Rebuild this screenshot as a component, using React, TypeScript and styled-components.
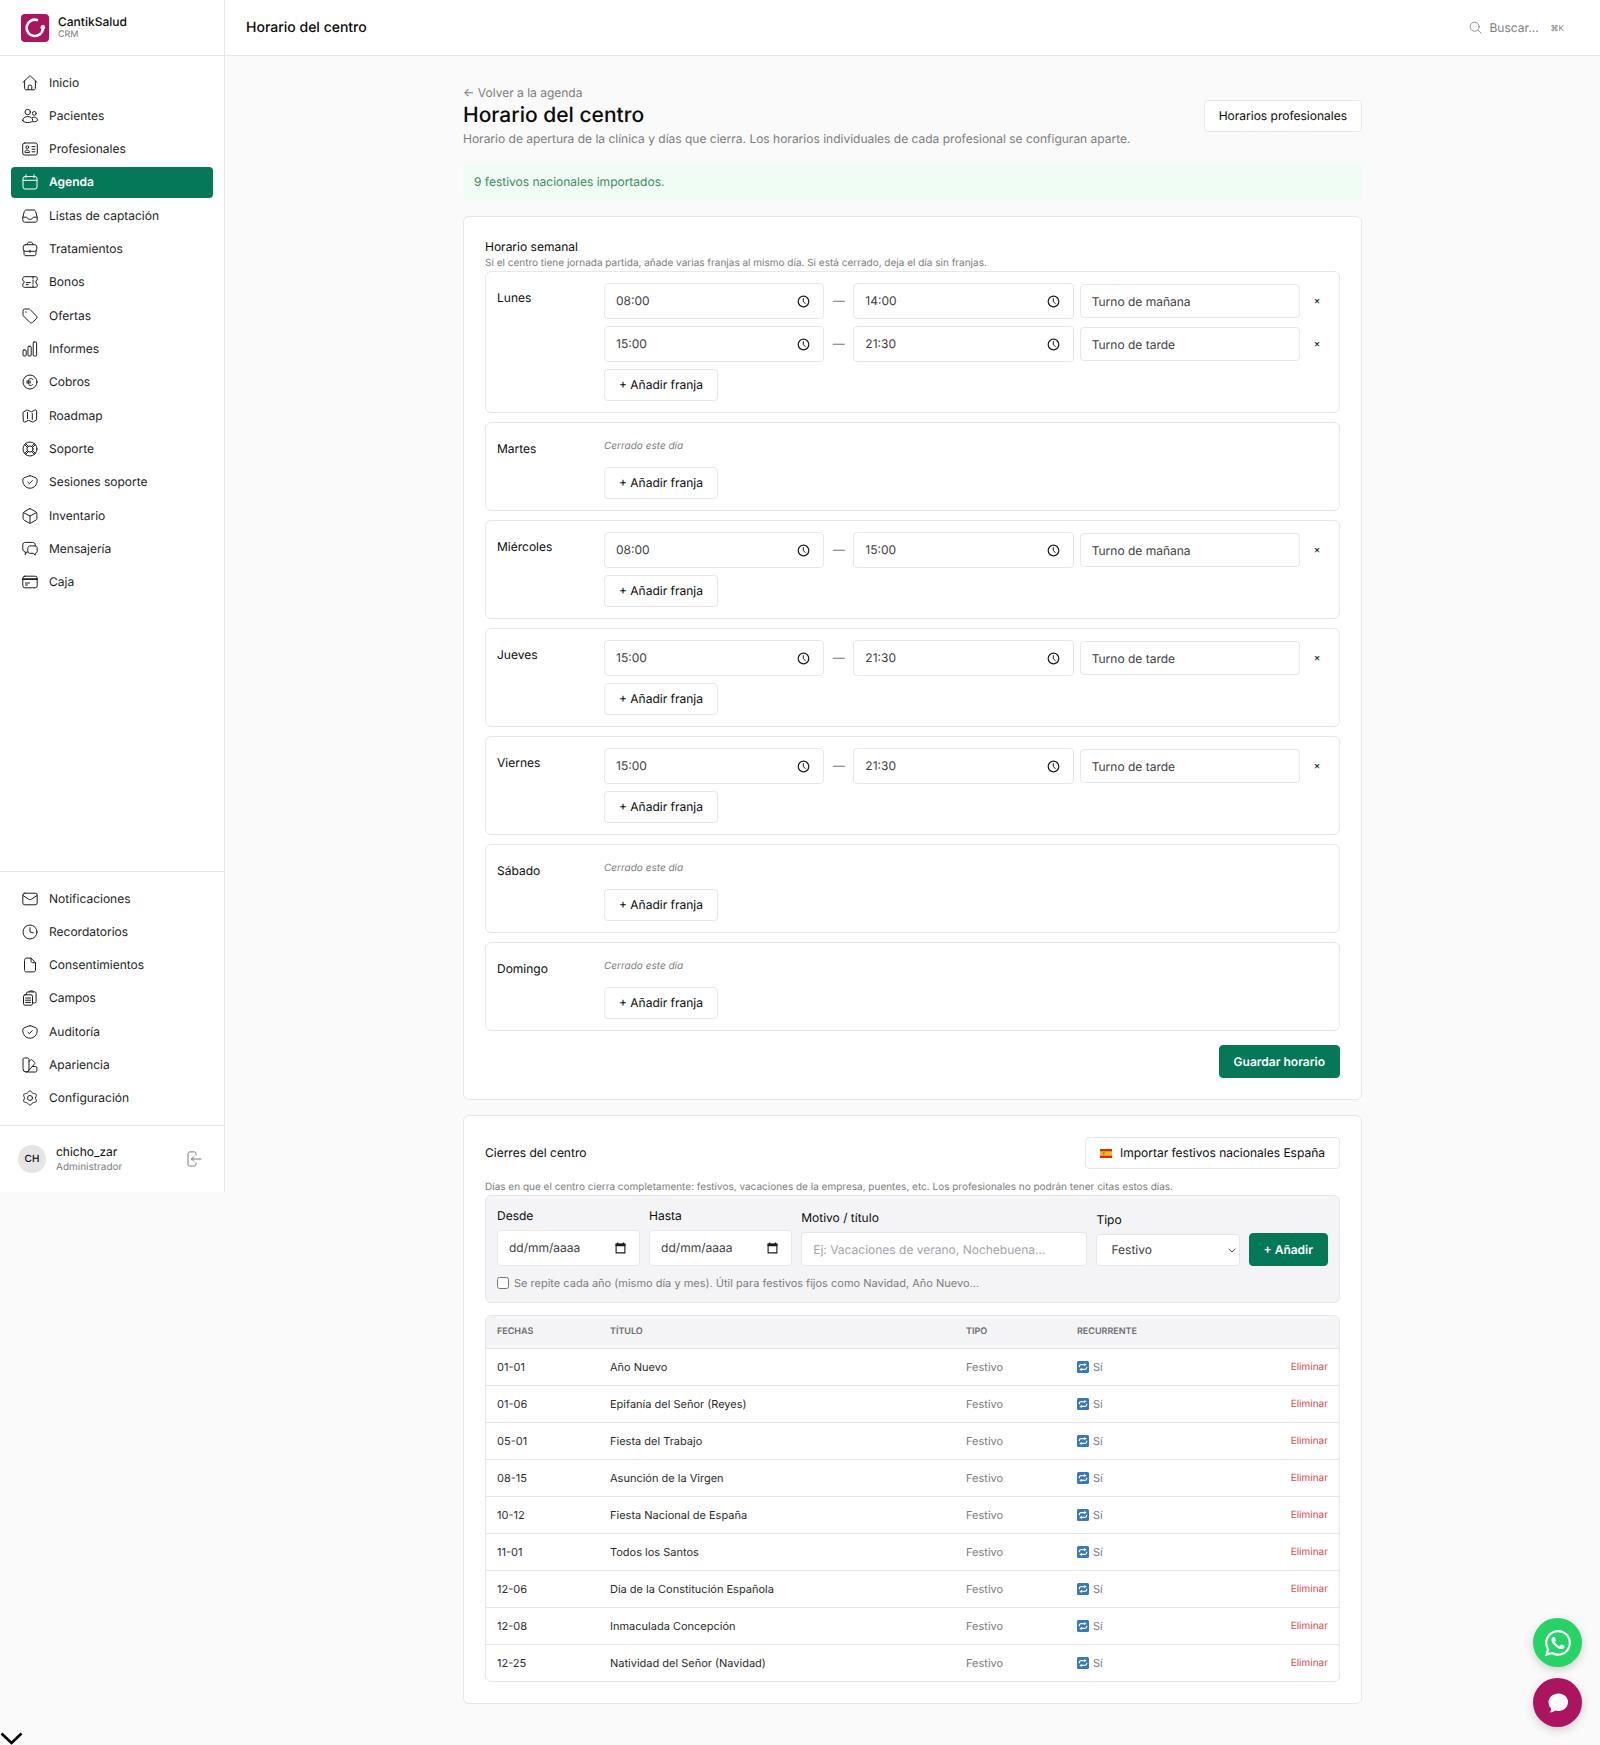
import React, { useState } from "react";
import styled, { createGlobalStyle, css } from "styled-components";

const color = {
  text: "#0a0a0a",
  soft: "#404040",
  muted: "#7c7c7c",
  line: "#e7e7e9",
  page: "#fafafa",
  panel: "#f4f4f6",
  green: "#047857",
  brand: "#ab155f",
};

const GlobalStyle = createGlobalStyle`
  *, *::before, *::after { box-sizing: border-box; }
  body {
    margin: 0;
    background: ${color.page};
    color: ${color.text};
    font-family: Inter, "Liberation Sans", sans-serif;
    font-size: 12px;
    line-height: 18px;
    text-rendering: geometricPrecision;
    -webkit-font-smoothing: antialiased;
  }
  h1, h2, p, ul { margin: 0; padding: 0; }
  button, input, select { font: inherit; color: inherit; text-rendering: inherit; }
  a { color: inherit; text-decoration: none; }
  svg { display: block; flex: none; }
`;

/* ---------- icons ---------- */

/* six-lobed outline of the settings wheel */
const wheel =
  Array.from({ length: 72 }, (_, i) => {
    const a = (i * Math.PI) / 36;
    const r = 6.3 + 0.8 * Math.cos(6 * (a - Math.PI / 2));
    return `${i ? "L" : "M"}${(8 + r * Math.cos(a)).toFixed(2)} ${(8 + r * Math.sin(a)).toFixed(2)}`;
  }).join("") + "Z";

const icons: Record<string, React.ReactNode> = {
  home: <><path d="M1 7.4 7.3 1.2a1 1 0 0 1 1.4 0L15 7.4M2.6 6v7.3c0 .9.6 1.5 1.5 1.5h7.8c.9 0 1.5-.6 1.5-1.5V6" /><path d="M6.2 14.6v-3.4c0-.6.4-1 1-1h1.6c.6 0 1 .4 1 1v3.4" /></>,
  people: <><circle cx="5.7" cy="4" r="2.7" /><circle cx="12.3" cy="5.4" r="1.9" /><path d="M.7 12.4c0-2.400 2.200-3.800 5-3.800s5 1.400 5 3.800c0 1.300-2.300 2.100-5 2.100s-5-.8-5-2.100Z" /><path d="M10.400 9.500c.6-.3 1.200-.4 1.900-.4 1.800 0 3.100 1.300 3.100 3 0 1.100-1.500 1.700-4.800 1.700" /></>,
  idcard: <><rect x=".7" y="2" width="14.600" height="12" rx="2" /><circle cx="5.300" cy="6.200" r="1.400" /><path d="M3 11c0-1.300 1-1.900 2.300-1.900s2.300.6 2.300 1.900zM10 5.600h3M10 8.200h3M10 10.800h3" /></>,
  calendar: <><rect x="1" y="2.500" width="14" height="12.500" rx="2" /><path d="M1 6.300h14M4 .8v3M12 .8v3" /></>,
  inbox: <path d="M.8 9.200h3.600c.6 0 .9.4 1.100.9.300.8 1 1.200 1.700 1.200h1.600c.7 0 1.400-.4 1.700-1.200.2-.5.500-.9 1.100-.9h3.600M.8 9.200l1.500-5.600C2.600 2.500 3.300 2 4.300 2h7.400c1 0 1.700.5 2 1.600l1.500 5.600v3.100c0 1.200-.7 1.900-1.900 1.900H2.700c-1.200 0-1.900-.7-1.900-1.900z" />,
  briefcase: <><rect x="1.200" y="3.700" width="13.600" height="6.600" rx="2.200" /><path d="M5.200 3.500c0-1.500.8-2.300 2-2.300h1.600c1.200 0 2 .8 2 2.300M2 10v2.800c0 1.200.7 1.900 1.900 1.900h8.200c1.200 0 1.900-.7 1.900-1.900V10M8 9.300v2" /></>,
  ticket: <><path d="M.8 4.300c0-1 .6-1.600 1.600-1.600h11.200c1 0 1.600.6 1.600 1.600v1.800a2 2 0 0 0 0 3.800v1.800c0 1-.6 1.600-1.600 1.600H2.400c-1 0-1.600-.6-1.600-1.600V9.900a2 2 0 0 0 0-3.800z" /><path d="M11 3v1.500M11 6v1.500M11 8.600v1.500M11 11.500V13M4.300 8.600h4M4.300 10.600h2" /></>,
  tag: <><path d="M1 2.800C1 1.700 1.700 1 2.800 1h4c.5 0 1 .2 1.300.6l6.300 6.300c.8.8.8 1.900 0 2.700l-3.800 3.800c-.8.8-1.900.8-2.700 0L1.600 8.100C1.200 7.800 1 7.300 1 6.800z" /><path d="M3.700 4h.6" /></>,
  chart: <><rect x="1" y="9" width="3.200" height="6" rx=".9" /><rect x="6" y="5.300" width="3.200" height="9.700" rx=".9" /><rect x="11.200" y="1" width="3.400" height="14" rx=".9" /></>,
  euro: <><circle cx="8" cy="8" r="7" /><path d="M10.800 5.500c-.5-.7-1.200-1-2-1-1.600 0-2.700 1.500-2.700 3.500s1.100 3.500 2.700 3.500c.8 0 1.500-.3 2-1M4.700 7.100h4M4.700 8.900h4" /></>,
  map: <path d="m1.300 4.300 3.100-2c.5-.3 1-.3 1.500 0l2.800 1.300c.4.200.9.200 1.300 0l2.700-1.500c1-.5 1.900 0 1.900 1v8.700l-3.100 2c-.5.3-1 .3-1.500 0l-2.800-1.300c-.4-.2-.9-.2-1.300 0l-2.700 1.500c-1 .5-1.900 0-1.900-1zM5.500 4.500v6M10.300 5.500v6" />,
  ring: <><circle cx="8" cy="8" r="7" /><circle cx="8" cy="8" r="3.100" /><path d="m2.600 3.700 2.600 2.500M3.700 2.600l2.500 2.600M10.800 6.200l2.600-2.500M9.800 5.200l2.500-2.600M10.800 9.800l2.600 2.500M9.800 10.800l2.500 2.600M5.200 9.800l-2.600 2.500M6.200 10.800l-2.500 2.600" /></>,
  shield: <><path d="M8 1.700c1 0 1.900.6 3.500 1.200 2.200.8 3.700 1 3.700 3.400 0 4.500-3 7.900-7.200 7.900S.8 10.800.8 6.300c0-2.400 1.500-2.600 3.700-3.400C6.100 2.300 7 1.700 8 1.700Z" /><path d="m5.800 8.200 1.600 1.500 2.900-3.100" /></>,
  box: <path d="M8 .8c.4 0 .8.1 1.200.3l4.700 2.800c.6.400 1 .9 1 1.600v5c0 .7-.4 1.200-1 1.600l-4.700 2.800c-.8.4-1.600.4-2.400 0l-4.700-2.800c-.6-.4-1-.9-1-1.600v-5c0-.7.4-1.200 1-1.600l4.700-2.800c.4-.2.8-.3 1.200-.3ZM1.500 4.600 8 8l6.500-3.400M8 8v7" />,
  chat: <><path d="M5.800 11H4.500l-1.200 2.600V10.800C1.600 10.500.8 9.500.8 7.900V4c0-1.700.9-2.600 2.600-2.600h7.200c1.700 0 2.600.9 2.600 2.600v.8" /><path d="M5.800 7.200c0-1.500.8-2.300 2.300-2.300h4.800c1.500 0 2.300.8 2.300 2.300V10c0 1.400-.7 2.200-2 2.300v1.900l-1.900-1.900H8.100c-1.500 0-2.300-.8-2.300-2.300z" /></>,
  card: <><rect x=".8" y="2.200" width="14.400" height="11.600" rx="2" /><path d="M.8 5.200h14.400" strokeWidth="1.700" /><path d="M3.500 9h4M3.500 11h2" /></>,
  mail: <><rect x=".8" y="2.200" width="14.400" height="11.600" rx="2" /><path d="m1 4.500 5.500 3.600c1 .6 2 .6 3 0L15 4.500" /></>,
  clock: <><circle cx="8" cy="8" r="7" /><path d="M8 3.800V8l3.300.8" /></>,
  file: <path d="M2.500 3c0-1.200.7-1.900 1.900-1.900h4.500L13.500 5.700V13c0 1.200-.7 1.900-1.900 1.900H4.400c-1.200 0-1.900-.7-1.900-1.900zM9 1.300v2.500c0 1.200.7 1.900 1.900 1.900h2.400" />,
  clipboard: <><rect x="1.500" y="4.800" width="9" height="10.400" rx="1.500" /><path d="M4.500 4.500V3.300c0-.9.5-1.400 1.400-1.400h6.800c.9 0 1.400.5 1.400 1.400v8.200c0 .9-.5 1.400-1.400 1.400h-1.900M7.200 1.900c0-.6.4-1 1-1h2.200c.6 0 1 .4 1 1M3.600 8h5M3.600 10.200h5M3.600 12.400h5" /></>,
  swatch: <><path d="M1 2.400C1 1.500 1.500 1 2.400 1h3.200C6.500 1 7 1.500 7 2.400V12a3 3 0 0 1-6 0zM7 4.500l1.400-1.400c.6-.6 1.300-.6 1.900 0l2.100 2.100c.6.6.6 1.300 0 1.900L6 14.300M10.500 9.500h3c.9 0 1.400.5 1.400 1.400v2.700c0 .9-.5 1.400-1.400 1.400H4" /></>,
  gear: <><circle cx="8" cy="8" r="2.500" /><path d={wheel} /></>,
  logout: <path d="M10 4V2.800c0-1.200-.7-1.900-1.900-1.900H3.900C2.700.9 2 1.600 2 2.800v10.400c0 1.200.7 1.900 1.900 1.900h4.200c1.200 0 1.900-.7 1.900-1.900V12M15 8H5.500M8 5.500 5.500 8 8 10.500" />,
  search: <><circle cx="7" cy="7" r="5.600" /><path d="m11.200 11.200 3.600 3.600" /></>,
};

function Icon({ name, size = 16 }: { name: string; size?: number }) {
  return (
    <svg width={size} height={size} viewBox="0 0 16 16" fill="none" stroke="currentColor" strokeLinecap="round" strokeLinejoin="round" aria-hidden="true">
      {icons[name]}
    </svg>
  );
}

const Logo = () => (
  <svg width="28" height="28" viewBox="0 0 28 28" aria-hidden="true">
    <rect width="28" height="28" rx="4" fill={color.brand} />
    <path d="M16 5.900A8.200 8.200 0 1 0 22 14" fill="none" stroke="#fff" strokeWidth="2.600" strokeLinecap="round" />
    <circle cx="21.800" cy="13.400" r="2.300" fill="#fff" />
  </svg>
);

const ClockGlyph = () => (
  <svg width="13" height="13" viewBox="0 0 13 13" fill="none" stroke="#1a1a1a" strokeWidth="1.200" aria-hidden="true">
    <circle cx="6.500" cy="6.500" r="5.300" />
    <path d="M6.300 3.200v3.500l2.300 2" strokeWidth="1" />
  </svg>
);

const DateGlyph = () => (
  <svg width="11" height="12" viewBox="0 0 11 12" aria-hidden="true">
    <path d="M1.100 2.200h8.800v8.700H1.100z" fill="none" stroke="#1a1a1a" strokeWidth="1.100" />
    <path d="M.6 1.600h9.800v2.600H.6zM2 .4h1.300v1.400H2zM7.700.4H9v1.400H7.700z" fill="#1a1a1a" />
  </svg>
);

const SelectArrow = styled.svg.attrs({ width: 8, height: 5, viewBox: "0 0 8 5", fill: "none", stroke: "#444", children: <path d="m.7.700 3.300 3.300 3.300-3.300" /> })`
  justify-self: end;
  margin-right: 3px;
  pointer-events: none;
`;

const SpainFlag = () => (
  <svg width="12" height="9" viewBox="0 0 12 9" aria-hidden="true">
    <path d="M0 0h12v9H0z" fill="#d52b1e" />
    <path d="M0 2.300h12v4.400H0z" fill="#fbbf12" />
    <path d="M2.700 3h2v2.700h-2z" fill="#d0733c" />
  </svg>
);

const RepeatGlyph = () => (
  <svg width="12" height="12" viewBox="0 0 12 12" aria-hidden="true">
    <rect width="12" height="12" rx="1.500" fill="#3478bd" />
    <path d="M2.300 6.200V5.400c0-1.100.7-1.800 1.800-1.800h3.600M9.700 5.800v.8c0 1.100-.7 1.800-1.800 1.800H4.300" fill="none" stroke="#fff" strokeWidth="1.200" />
    <path d="m7.200 1.900 2.500 1.700-2.500 1.700zM4.800 6.700 2.300 8.400l2.500 1.700z" fill="#fff" />
  </svg>
);

/* ---------- shell ---------- */

const Shell = styled.div`
  display: grid;
  grid-template-columns: 225px minmax(0, 1fr);
  align-items: start;
`;

const Sidebar = styled.aside`
  display: flex;
  flex-direction: column;
  min-height: 1192px;
  background: #fff;
  border-right: 1px solid ${color.line};
`;

const Brand = styled.div`
  display: flex;
  align-items: center;
  gap: 9px;
  height: 56px;
  padding: 0 21px;
  border-bottom: 1px solid ${color.line};
`;

const BrandName = styled.div`
  font-weight: 500;
  line-height: 14px;
`;

const BrandTag = styled.div`
  font-size: 9px;
  line-height: 12px;
  color: ${color.muted};
`;

const PrimaryNav = styled.nav`
  flex: 1;
  padding: 11px 11px;
`;

const SecondaryNav = styled.nav`
  padding: 11px 11px;
  border-top: 1px solid ${color.line};
`;

const NavList = styled.ul<{ $height: number }>`
  display: flex;
  flex-direction: column;
  justify-content: space-between;
  min-height: ${(p) => p.$height}px;
  list-style: none;
`;

const NavLink = styled.a<{ $active?: boolean }>`
  display: flex;
  align-items: center;
  gap: 11px;
  height: 31px;
  padding: 0 11px;
  border-radius: 4px;
  color: #1c1c1c;
  ${(p) =>
    p.$active &&
    css`
      background: ${color.green};
      color: #fff;
      font-weight: 600;
    `}
`;

const UserBar = styled.div`
  display: flex;
  align-items: center;
  gap: 10px;
  height: 67px;
  padding: 0 22px 0 18px;
  border-top: 1px solid ${color.line};
`;

const Avatar = styled.div`
  display: grid;
  place-items: center;
  width: 28px;
  height: 28px;
  border-radius: 50%;
  background: #e5e5e5;
  font-size: 10px;
  font-weight: 500;
`;

const UserText = styled.div`
  flex: 1;
  line-height: 16px;
`;

const UserRole = styled.div`
  font-size: 10px;
  line-height: 15px;
  color: ${color.muted};
`;

const IconButton = styled.button`
  display: grid;
  place-items: center;
  padding: 0;
  border: 0;
  background: none;
  color: ${color.muted};
`;

const Topbar = styled.header`
  display: flex;
  align-items: center;
  justify-content: space-between;
  height: 56px;
  padding: 0 36px 0 21px;
  background: #fff;
  border-bottom: 1px solid ${color.line};
`;

const TopTitle = styled.div`
  font-size: 14px;
  font-weight: 500;
`;

const SearchButton = styled.button`
  display: flex;
  align-items: center;
  gap: 7px;
  padding: 0;
  border: 0;
  background: none;
  color: ${color.muted};
`;

const Shortcut = styled.kbd`
  margin-left: 5px;
  font-family: inherit;
  font-size: 8px;
`;

const Content = styled.main`
  display: flex;
  flex-direction: column;
  gap: 15px;
  max-width: 943px;
  margin: 0 auto;
  padding: 28px 22px 27px;
`;

const PageHead = styled.div`
  display: flex;
  align-items: center;
  justify-content: space-between;
`;

const BackLink = styled.a`
  display: block;
  color: ${color.muted};
`;

const PageTitle = styled.h1`
  font-size: 21px;
  font-weight: 500;
  line-height: 28px;
`;

const Lead = styled.p`
  color: ${color.muted};
`;

const Notice = styled.div`
  padding: 10px 11px;
  border-radius: 4px;
  background: #effdf4;
  color: #3d8a60;
`;

const Button = styled.button<{ $primary?: boolean }>`
  display: inline-flex;
  align-items: center;
  justify-content: center;
  gap: 8px;
  height: 32px;
  padding: 0 14px;
  border: 1px solid ${color.line};
  border-radius: 4px;
  background: #fff;
  white-space: nowrap;
  ${(p) =>
    p.$primary &&
    css`
      height: 33px;
      border-color: ${color.green};
      background: ${color.green};
      color: #fff;
      font-weight: 600;
    `}
`;

const ButtonLink = styled(Button).attrs({ as: "a", href: "#profesionales" })``;

const Card = styled.section`
  padding: 21px;
  border: 1px solid ${color.line};
  border-radius: 6px;
  background: #fff;
`;

const CardTitle = styled.h2`
  font-size: 12px;
  font-weight: 400;
  line-height: 18px;
`;

const CardHint = styled.p`
  font-size: 10px;
  line-height: 15px;
  color: ${color.muted};
`;

/* ---------- weekly schedule ---------- */

const DayList = styled.div`
  display: flex;
  flex-direction: column;
  gap: 9px;
`;

const DayBox = styled.div`
  display: grid;
  grid-template-columns: 96px minmax(0, 1fr);
  column-gap: 11px;
  padding: 11px;
  border: 1px solid ${color.line};
  border-radius: 6px;
`;

const DayName = styled.div`
  padding-top: 6px;
`;

const Slots = styled.div`
  display: flex;
  flex-direction: column;
  align-items: flex-start;
  gap: 7px;
`;

const Slot = styled.div`
  display: grid;
  grid-template-columns: minmax(0, 1fr) 17px minmax(0, 1fr) minmax(0, 1fr) 22px;
  align-items: center;
  gap: 6px;
  width: 100%;
`;

const Dash = styled.span`
  text-align: center;
  color: ${color.muted};
`;

const Closed = styled.p`
  padding: 3px 0 5px;
  font-size: 10px;
  font-style: italic;
  color: ${color.muted};
`;

const boxed = css`
  width: 100%;
  border: 1px solid ${color.line};
  border-radius: 4px;
  background: #fff;
  color: ${color.soft};
`;

const PickerBox = styled.div`
  ${boxed}
  display: flex;
  align-items: center;
  height: 36px;
  padding: 0 13px 0 11px;
`;

const PickerInput = styled.input`
  flex: 1;
  min-width: 0;
  padding: 0;
  border: 0;
  outline: 0;
  background: none;
  &::placeholder {
    color: ${color.soft};
    opacity: 1;
  }
`;

const TextInput = styled.input`
  ${boxed}
  height: 34px;
  padding: 0 11px;
  &::placeholder {
    color: #a3a3a8;
    opacity: 1;
  }
`;

const SelectBox = styled.div`
  ${boxed}
  display: grid;
  align-items: center;
  height: 32px;
  & > * {
    grid-area: 1 / 1;
  }
`;

const Select = styled.select`
  appearance: none;
  width: 100%;
  height: 30px;
  padding: 0 14px;
  border: 0;
  background: none;
`;

const RemoveButton = styled.button`
  padding: 0;
  border: 0;
  background: none;
  font-size: 10px;
`;

const CardFoot = styled.div`
  display: flex;
  justify-content: flex-end;
  padding-top: 14px;
`;

/* ---------- closures ---------- */

const CardHead = styled.div`
  display: flex;
  align-items: center;
  justify-content: space-between;
  margin-bottom: 11px;
`;

const ClosureForm = styled.form`
  display: flex;
  flex-direction: column;
  gap: 9px;
  margin-bottom: 12px;
  padding: 11px;
  border: 1px solid ${color.line};
  border-radius: 6px;
  background: ${color.panel};
`;

const Fields = styled.div`
  display: grid;
  grid-template-columns: minmax(0, 1fr) minmax(0, 1fr) minmax(0, 2fr) minmax(0, 1fr) auto;
  align-items: end;
  gap: 9px;
`;

const Field = styled.div`
  display: flex;
  flex-direction: column;
  gap: 5px;
`;

const CheckLabel = styled.label`
  display: flex;
  align-items: center;
  gap: 5px;
  height: 16px;
  font-size: 11px;
  color: ${color.muted};
`;

const CheckBox = styled.input`
  width: 12px;
  height: 12px;
  margin: 0;
`;

const TableFrame = styled.div`
  overflow: hidden;
  border: 1px solid ${color.line};
  border-radius: 6px;
`;

const Table = styled.table`
  width: 100%;
  border-collapse: collapse;
  table-layout: fixed;
  font-size: 11px;
`;

const Th = styled.th<{ $width?: string }>`
  width: ${(p) => p.$width ?? "auto"};
  height: 32px;
  padding: 0 11px;
  background: ${color.panel};
  color: #6b6b70;
  font-size: 9px;
  font-weight: 600;
  text-align: left;
`;

const Row = styled.tr`
  border-top: 1px solid ${color.line};
`;

const Td = styled.td<{ $muted?: boolean; $end?: boolean }>`
  height: 37px;
  padding: 0 11px;
  color: ${(p) => (p.$muted ? color.muted : "#2b2b2b")};
  text-align: ${(p) => (p.$end ? "right" : "left")};
`;

const Recurring = styled.span`
  display: flex;
  align-items: center;
  gap: 4px;
`;

const DeleteButton = styled.button`
  padding: 0;
  border: 0;
  background: none;
  color: #e0484d;
  font-size: 10px;
`;

/* ---------- floating ---------- */

const Floating = styled.div`
  position: fixed;
  right: 18px;
  bottom: 18px;
  display: flex;
  flex-direction: column;
  gap: 11px;
`;

const RoundButton = styled.button<{ $bg: string }>`
  display: grid;
  place-items: center;
  width: 49px;
  height: 49px;
  padding: 0;
  border: 0;
  border-radius: 50%;
  background: ${(p) => p.$bg};
  color: #fff;
  box-shadow: 0 3px 10px rgba(0, 0, 0, 0.18);
`;

const ScrollCue = styled.div`
  height: 15px;
`;

/* ---------- data ---------- */

const primary: [string, string][] = [
  ["home", "Inicio"],
  ["people", "Pacientes"],
  ["idcard", "Profesionales"],
  ["calendar", "Agenda"],
  ["inbox", "Listas de captación"],
  ["briefcase", "Tratamientos"],
  ["ticket", "Bonos"],
  ["tag", "Ofertas"],
  ["chart", "Informes"],
  ["euro", "Cobros"],
  ["map", "Roadmap"],
  ["ring", "Soporte"],
  ["shield", "Sesiones soporte"],
  ["box", "Inventario"],
  ["chat", "Mensajería"],
  ["card", "Caja"],
];

const secondary: [string, string][] = [
  ["mail", "Notificaciones"],
  ["clock", "Recordatorios"],
  ["file", "Consentimientos"],
  ["clipboard", "Campos"],
  ["shield", "Auditoría"],
  ["swatch", "Apariencia"],
  ["gear", "Configuración"],
];

const morning = "Turno de mañana";
const evening = "Turno de tarde";

const week: { day: string; slots: [string, string, string][] }[] = [
  { day: "Lunes", slots: [["08:00", "14:00", morning], ["15:00", "21:30", evening]] },
  { day: "Martes", slots: [] },
  { day: "Miércoles", slots: [["08:00", "15:00", morning]] },
  { day: "Jueves", slots: [["15:00", "21:30", evening]] },
  { day: "Viernes", slots: [["15:00", "21:30", evening]] },
  { day: "Sábado", slots: [] },
  { day: "Domingo", slots: [] },
];

const holidays: [string, string][] = [
  ["01-01", "Año Nuevo"],
  ["01-06", "Epifanía del Señor (Reyes)"],
  ["05-01", "Fiesta del Trabajo"],
  ["08-15", "Asunción de la Virgen"],
  ["10-12", "Fiesta Nacional de España"],
  ["11-01", "Todos los Santos"],
  ["12-06", "Día de la Constitución Española"],
  ["12-08", "Inmaculada Concepción"],
  ["12-25", "Natividad del Señor (Navidad)"],
];

/* ---------- components ---------- */

function Nav({ items, height }: { items: [string, string][]; height: number }) {
  return (
    <NavList $height={height}>
      {items.map(([icon, label]) => (
        <li key={label}>
          <NavLink href={`#${icon}`} $active={label === "Agenda"}>
            <Icon name={icon} />
            {label}
          </NavLink>
        </li>
      ))}
    </NavList>
  );
}

function TimeField({ value, label }: { value: string; label: string }) {
  return (
    <PickerBox>
      <PickerInput defaultValue={value} aria-label={label} />
      <ClockGlyph />
    </PickerBox>
  );
}

function DateField({ id, label }: { id: string; label: string }) {
  return (
    <Field>
      <label htmlFor={id}>{label}</label>
      <PickerBox>
        <PickerInput id={id} placeholder="dd/mm/aaaa" />
        <DateGlyph />
      </PickerBox>
    </Field>
  );
}

function WeeklySchedule() {
  return (
    <Card>
      <CardTitle>Horario semanal</CardTitle>
      <CardHint>Si el centro tiene jornada partida, añade varias franjas al mismo día. Si está cerrado, deja el día sin franjas.</CardHint>
      <DayList>
        {week.map(({ day, slots }) => (
          <DayBox key={day}>
            <DayName>{day}</DayName>
            <Slots>
              {slots.length === 0 && <Closed>Cerrado este día</Closed>}
              {slots.map(([from, to, name]) => (
                <Slot key={from}>
                  <TimeField value={from} label={`${day}: desde`} />
                  <Dash>—</Dash>
                  <TimeField value={to} label={`${day}: hasta`} />
                  <TextInput defaultValue={name} aria-label={`${day}: turno`} />
                  <RemoveButton type="button">×</RemoveButton>
                </Slot>
              ))}
              <Button type="button">+ Añadir franja</Button>
            </Slots>
          </DayBox>
        ))}
      </DayList>
      <CardFoot>
        <Button type="button" $primary>Guardar horario</Button>
      </CardFoot>
    </Card>
  );
}

function Closures() {
  const [repeat, setRepeat] = useState(false);
  return (
    <Card>
      <CardHead>
        <CardTitle>Cierres del centro</CardTitle>
        <Button type="button">
          <SpainFlag />
          Importar festivos nacionales España
        </Button>
      </CardHead>
      <CardHint>Días en que el centro cierra completamente: festivos, vacaciones de la empresa, puentes, etc. Los profesionales no podrán tener citas estos días.</CardHint>
      <ClosureForm>
        <Fields>
          <DateField id="desde" label="Desde" />
          <DateField id="hasta" label="Hasta" />
          <Field>
            <label htmlFor="motivo">Motivo / título</label>
            <TextInput id="motivo" placeholder="Ej: Vacaciones de verano, Nochebuena..." />
          </Field>
          <Field>
            <label htmlFor="tipo">Tipo</label>
            <SelectBox>
              <Select id="tipo">
                <option>Festivo</option>
              </Select>
              <SelectArrow />
            </SelectBox>
          </Field>
          <Button type="button" $primary>+ Añadir</Button>
        </Fields>
        <CheckLabel>
          <CheckBox type="checkbox" checked={repeat} onChange={() => setRepeat(!repeat)} />
          Se repite cada año (mismo día y mes). Útil para festivos fijos como Navidad, Año Nuevo...
        </CheckLabel>
      </ClosureForm>
      <TableFrame>
        <Table>
          <thead>
            <tr>
              <Th $width="113px">FECHAS</Th>
              <Th>TÍTULO</Th>
              <Th $width="111px">TIPO</Th>
              <Th $width="152px">RECURRENTE</Th>
              <Th $width="121px" aria-label="Acciones" />
            </tr>
          </thead>
          <tbody>
            {holidays.map(([date, title]) => (
              <Row key={date}>
                <Td>{date}</Td>
                <Td>{title}</Td>
                <Td $muted>Festivo</Td>
                <Td $muted>
                  <Recurring><RepeatGlyph />Sí</Recurring>
                </Td>
                <Td $end>
                  <DeleteButton type="button">Eliminar</DeleteButton>
                </Td>
              </Row>
            ))}
          </tbody>
        </Table>
      </TableFrame>
    </Card>
  );
}

export default function App() {
  return (
    <>
      <GlobalStyle />
      <Shell>
        <Sidebar>
          <Brand>
            <Logo />
            <div>
              <BrandName>CantikSalud</BrandName>
              <BrandTag>CRM</BrandTag>
            </div>
          </Brand>
          <PrimaryNav>
            <Nav items={primary} height={531} />
          </PrimaryNav>
          <SecondaryNav>
            <Nav items={secondary} height={231} />
          </SecondaryNav>
          <UserBar>
            <Avatar>CH</Avatar>
            <UserText>
              chicho_zar
              <UserRole>Administrador</UserRole>
            </UserText>
            <IconButton type="button" aria-label="Cerrar sesión">
              <Icon name="logout" />
            </IconButton>
          </UserBar>
        </Sidebar>
        <div>
          <Topbar>
            <TopTitle>Horario del centro</TopTitle>
            <SearchButton type="button">
              <Icon name="search" size={13} />
              Buscar...
              <Shortcut>⌘K</Shortcut>
            </SearchButton>
          </Topbar>
          <Content>
            <PageHead>
              <div>
                <BackLink href="#agenda">← Volver a la agenda</BackLink>
                <PageTitle>Horario del centro</PageTitle>
                <Lead>Horario de apertura de la clínica y días que cierra. Los horarios individuales de cada profesional se configuran aparte.</Lead>
              </div>
              <ButtonLink>Horarios profesionales</ButtonLink>
            </PageHead>
            <Notice role="status">9 festivos nacionales importados.</Notice>
            <WeeklySchedule />
            <Closures />
          </Content>
        </div>
      </Shell>
      <ScrollCue>
        <svg width="23" height="15" viewBox="0 0 23 15" fill="none" stroke="#000" strokeWidth="2.600" aria-hidden="true">
          <path d="m1.500 2.500 10 9.500 10-9.500" />
        </svg>
      </ScrollCue>
      <Floating>
        <RoundButton type="button" $bg="#25d366" aria-label="WhatsApp">
          <svg width="26" height="26" viewBox="0 0 24 24" fill="currentColor" aria-hidden="true">
            <path d="M17.472 14.382c-.297-.149-1.758-.867-2.030-.967-.273-.099-.471-.148-.67.150-.197.297-.767.966-.940 1.164-.173.199-.347.223-.644.075-.297-.150-1.255-.463-2.390-1.475-.883-.788-1.480-1.761-1.653-2.059-.173-.297-.018-.458.130-.606.134-.133.298-.347.446-.520.149-.174.198-.298.298-.497.099-.198.050-.371-.025-.520-.075-.149-.669-1.612-.916-2.207-.242-.579-.487-.500-.669-.510-.173-.008-.371-.010-.570-.010-.198 0-.520.074-.792.372-.272.297-1.040 1.016-1.040 2.479 0 1.462 1.065 2.875 1.213 3.074.149.198 2.096 3.200 5.077 4.487.709.306 1.262.489 1.694.625.712.227 1.360.195 1.871.118.571-.085 1.758-.719 2.006-1.413.248-.694.248-1.289.173-1.413-.074-.124-.272-.198-.570-.347m-5.421 7.403h-.004a9.870 9.870 0 0 1-5.031-1.378l-.361-.214-3.741.982.998-3.648-.235-.374a9.860 9.860 0 0 1-1.510-5.260c.001-5.450 4.436-9.884 9.888-9.884 2.640 0 5.122 1.030 6.988 2.898a9.825 9.825 0 0 1 2.893 6.994c-.003 5.450-4.437 9.884-9.885 9.884m8.413-18.297A11.815 11.815 0 0 0 12.050 0C5.495 0 .160 5.335.157 11.892c0 2.096.547 4.142 1.588 5.945L.057 24l6.305-1.654a11.882 11.882 0 0 0 5.683 1.448h.005c6.554 0 11.890-5.335 11.893-11.893a11.821 11.821 0 0 0-3.480-8.413" />
          </svg>
        </RoundButton>
        <RoundButton type="button" $bg={color.brand} aria-label="Chat">
          <svg width="22" height="22" viewBox="0 0 22 22" fill="currentColor" aria-hidden="true">
            <path d="M11.500 1.500c5.500 0 9.500 3.700 9.500 8.500s-4 9-9.500 9c-1.200 0-2.300-.2-3.300-.5-1.400 1.300-3.100 2-5.400 2 1-1.200 1.400-2.500 1.300-4C2.700 14.900 1.500 12.700 1.500 10c0-4.800 4.500-8.500 10-8.500Z" />
          </svg>
        </RoundButton>
      </Floating>
    </>
  );
}
